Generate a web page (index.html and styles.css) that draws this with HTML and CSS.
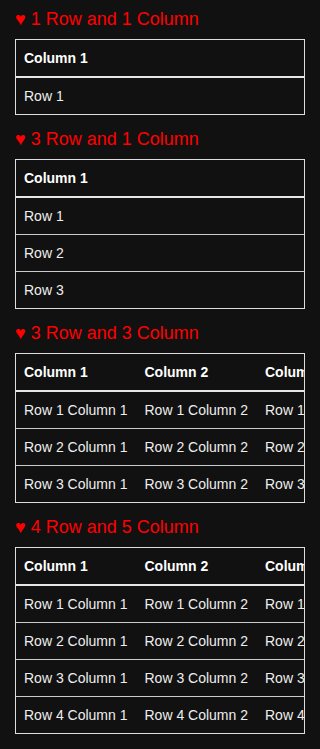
FILE: index.html
```html
<!DOCTYPE html>
<html lang="en">
<head>
  <meta charset="UTF-8">
  <meta name="viewport" content="width=device-width, initial-scale=1.0">
  <title>Tables</title>
  <link rel="stylesheet" href="styles.css">
</head>
<body>
  <div class="block">
    <h3>&hearts; 1 Row and 1 Column</h3>
    <div class="table-wrap">
      <table>
        <thead>
          <tr><th>Column 1</th></tr>
        </thead>
        <tbody>
          <tr><td>Row 1</td></tr>
        </tbody>
      </table>
    </div>
  </div>

  <div class="block">
    <h3>&hearts; 3 Row and 1 Column</h3>
    <div class="table-wrap">
      <table>
        <thead>
          <tr><th>Column 1</th></tr>
        </thead>
        <tbody>
          <tr><td>Row 1</td></tr>
          <tr><td>Row 2</td></tr>
          <tr><td>Row 3</td></tr>
        </tbody>
      </table>
    </div>
  </div>

  <div class="block">
    <h3>&hearts; 3 Row and 3 Column</h3>
    <div class="table-wrap">
      <table>
        <thead>
          <tr><th>Column 1</th><th>Column 2</th><th>Column 3</th></tr>
        </thead>
        <tbody>
          <tr><td>Row 1 Column 1</td><td>Row 1 Column 2</td><td>Row 1 Column 3</td></tr>
          <tr><td>Row 2 Column 1</td><td>Row 2 Column 2</td><td>Row 2 Column 3</td></tr>
          <tr><td>Row 3 Column 1</td><td>Row 3 Column 2</td><td>Row 3 Column 3</td></tr>
        </tbody>
      </table>
    </div>
  </div>

  <div class="block">
    <h3>&hearts; 4 Row and 5 Column</h3>
    <div class="table-wrap">
      <table>
        <thead>
          <tr><th>Column 1</th><th>Column 2</th><th>Column 3</th><th>Column 4</th><th>Column 5</th></tr>
        </thead>
        <tbody>
          <tr><td>Row 1 Column 1</td><td>Row 1 Column 2</td><td>Row 1 Column 3</td><td>Row 1 Column 4</td><td>Row 1 Column 5</td></tr>
          <tr><td>Row 2 Column 1</td><td>Row 2 Column 2</td><td>Row 2 Column 3</td><td>Row 2 Column 4</td><td>Row 2 Column 5</td></tr>
          <tr><td>Row 3 Column 1</td><td>Row 3 Column 2</td><td>Row 3 Column 3</td><td>Row 3 Column 4</td><td>Row 3 Column 5</td></tr>
          <tr><td>Row 4 Column 1</td><td>Row 4 Column 2</td><td>Row 4 Column 3</td><td>Row 4 Column 4</td><td>Row 4 Column 5</td></tr>
        </tbody>
      </table>
    </div>
  </div>
</body>
</html>
```

FILE: styles.css
```css
body {
  font-family: "Liberation Sans", Arial, sans-serif;
  background-color: #111;
  color: #eee;
  margin: 0;
  padding: 9px 15px;
}
.block {
  margin-bottom: 14px;
}
h3 {
  color: #f00;
  font-size: 18px;
  font-weight: normal;
  line-height: 21px;
  margin: 0 0 9px;
}
/* wide tables just get clipped at the box edge */
.table-wrap {
  border: 1px solid #ddd;
  overflow: hidden;
}
table {
  width: 100%;
  border-collapse: collapse;
  font-size: 14px;
}
th, td {
  text-align: left;
  padding: 10px 9px 10px 8px;
  line-height: 16px;
  white-space: nowrap;
}
th {
  color: #fff;
  font-weight: bold;
  border-bottom: 2px solid #e6e6e6;
}
tbody tr + tr td {
  border-top: 1px solid #ccc;
}
```
